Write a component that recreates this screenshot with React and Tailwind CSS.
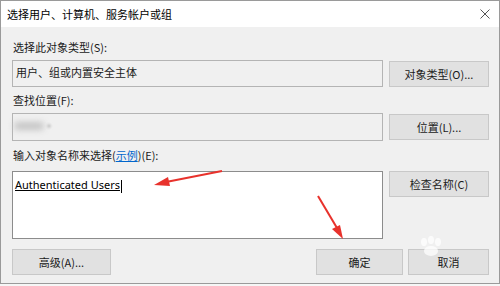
import React from "react";

const cjk = { fontFamily: '"Noto Sans CJK SC", "Noto Sans", sans-serif' };

function Btn({ children, className = "" }) {
  return (
    <div
      className={`flex items-center justify-center bg-[#e1e1e1] border border-[#c8c8c8] text-[11px] text-[#1a1a1a] ${className}`}
    >
      {children}
    </div>
  );
}

export default function App() {
  return (
    <div className="relative w-[500px] h-[286px] bg-[#f6f6f6] overflow-hidden" style={cjk}>
      <div className="w-[500px] h-[284px] border border-[#9a9a9a] bg-[#f0f0f0] flex flex-col">
        {/* title bar */}
        <div className="h-[26px] bg-white flex items-center justify-between pl-[6px] pr-[9px] shrink-0">
          <span className="text-[11px] text-black leading-none">选择用户、计算机、服务帐户或组</span>
          <svg width="10" height="10" viewBox="0 0 10 10">
            <path d="M0.5 0.5 L9.5 9.5 M9.5 0.5 L0.5 9.5" stroke="#555" strokeWidth="1" fill="none" />
          </svg>
        </div>

        <div className="flex flex-col pl-[11px] pr-[10px]">
          <div className="mt-[13px] h-[14px] text-[11px] leading-[14px] text-[#1a1a1a] pl-[1px]">选择此对象类型(S):</div>
          <div className="mt-[6px] flex gap-[6px] items-start">
            <div className="w-[371px] h-[27px] border border-[#b4b4b4] bg-[#f0f0f0] text-[11px] leading-[14px] pt-[4px] pl-[3px] text-[#1a1a1a]">
              用户、组或内置安全主体
            </div>
            <Btn className="w-[100px] h-[26px] mt-[1px]">对象类型(O)...</Btn>
          </div>

          <div className="mt-[6px] h-[14px] text-[11px] leading-[14px] text-[#1a1a1a] pl-[1px]">查找位置(F):</div>
          <div className="mt-[6px] flex gap-[6px] items-start">
            <div className="w-[371px] h-[28px] border border-[#b4b4b4] bg-[#f0f0f0] relative">
              <div className="absolute left-[1px] top-[8px] w-[30px] h-[8px] bg-[#c4c4c4] blur-[3px] rounded-full" />
              <div className="absolute left-[34px] top-[10px] w-[4px] h-[4px] bg-[#c8c8c8] blur-[1px] rounded-full" />
            </div>
            <Btn className="w-[100px] h-[26px] mt-[1px]">位置(L)...</Btn>
          </div>

          <div className="mt-[7px] h-[14px] text-[11px] leading-[14px] text-[#1a1a1a] pl-[1px]">
            输入对象名称来选择(<span className="text-[#0066cc] underline">示例</span>)(E):
          </div>
          <div className="mt-[9px] flex gap-[6px] items-start">
            <div className="w-[371px] h-[68px] border border-[#8c8c8c] bg-white pt-[5px] pl-[2px] text-[11px] leading-[14px]">
              <span
                className="text-black underline"
                style={{ fontFamily: '"Noto Sans", sans-serif' }}
              >
                Authenticated Users
              </span>
              <span className="inline-block w-[1px] h-[13px] bg-black align-middle ml-[1px]" />
            </div>
            <Btn className="w-[100px] h-[26px]">检查名称(C)</Btn>
          </div>

          <div className="mt-[10px] flex items-start">
            <Btn className="w-[99px] h-[26px]">高级(A)...</Btn>
            <div className="flex-1" />
            <Btn className="w-[87px] h-[26px]">确定</Btn>
            <Btn className="w-[81px] h-[26px] ml-[5px]">取消</Btn>
          </div>
        </div>
      </div>

      {/* watermark paw (faint) */}
      <svg className="absolute left-[416px] top-[236px] pointer-events-none" width="30" height="22" viewBox="0 0 30 22">
        <g fill="#ffffff" opacity="0.75">
          <ellipse cx="8" cy="6" rx="3" ry="4" />
          <ellipse cx="15" cy="4" rx="3" ry="4" />
          <ellipse cx="22" cy="6" rx="3" ry="4" />
          <ellipse cx="15" cy="15" rx="7" ry="5" />
        </g>
      </svg>

      {/* arrows */}
      <svg className="absolute left-0 top-0 pointer-events-none" width="500" height="286">
        <path d="M222 171 L166 182" stroke="#e8322c" strokeWidth="2" fill="none" />
        <path d="M154 185 L168 177 L170 186 Z" fill="#e8322c" />
        <path d="M318 196 L337 228" stroke="#e8322c" strokeWidth="2" fill="none" />
        <path d="M343 239 L332 229 L340 225 Z" fill="#e8322c" />
      </svg>
    </div>
  );
}
